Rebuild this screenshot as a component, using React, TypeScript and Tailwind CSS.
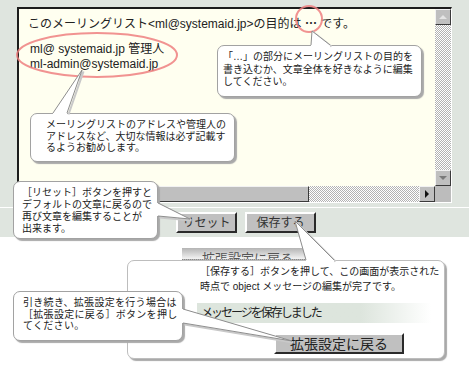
import React from "react";

type Pt = [number, number];

const pts = (list: Pt[]) => list.map((p) => p.join(",")).join(" ");

// callout tail: white wedge that hides the bubble border at its base, plus outline
const Tail = ({ fill, line }: { fill: Pt[]; line: Pt[] }) => (
  <svg
    className="pointer-events-none absolute left-0 top-0"
    width={469}
    height={369}
  >
    <polyline
      points={pts(line.map(([x, y]) => [x + 1.5, y + 1.5] as Pt))}
      fill="none"
      stroke="#c9c9c9"
      strokeWidth={2}
    />
    <polygon points={pts(fill)} fill="#fff" />
    <polyline points={pts(line)} fill="none" stroke="#8e8e8e" strokeWidth={1} />
  </svg>
);

const Bubble = ({
  className,
  children,
}: {
  className: string;
  children?: React.ReactNode;
}) => (
  <div
    className={`absolute rounded-[7px] border border-[#a2a2a2] bg-white shadow-[2px_2px_1px_#a9a9a9] ${className}`}
  >
    {children}
  </div>
);

const Arrow = ({ dir, tone }: { dir: "up" | "down" | "right"; tone: string }) => {
  const shape =
    dir === "up" ? "4,10 12,10 8,6" : dir === "down" ? "4,6 12,6 8,10" : "6,4 6,12 10,8";
  return (
    <div className="flex h-[16px] w-[16px] items-center justify-center border border-t-[#f2f2f2] border-l-[#f2f2f2] border-r-[#3a3a3a] border-b-[#3a3a3a] bg-[#bfbfbf]">
      <svg width={16} height={16} className="-m-px">
        <polygon points={shape} fill={tone} />
      </svg>
    </div>
  );
};

const checker =
  "bg-[image:repeating-conic-gradient(#b2b2b2_0%_25%,#ffffff_0%_50%)] bg-[length:2px_2px]";

const App = () => {
  return (
    <div className="relative h-[369px] w-[469px] overflow-hidden bg-white font-['Liberation_Sans','Noto_Sans_CJK_JP',sans-serif] text-[#222]">
      {/* editor panel */}
      <div className="h-[237px] bg-[#dfe5df] pt-[7px]">
        <div className="ml-[17px] flex h-[196px] w-[435px] flex-col border-t-2 border-l-2 border-r border-b border-t-[#1c1c1c] border-l-[#1c1c1c] border-r-white border-b-white">
          <div className="flex flex-1">
            <div className="flex-1 bg-[#fffff0] pl-[9px] pt-[6px] text-[12px] leading-[15px]">
              <div className="whitespace-nowrap">
                このメーリングリスト&lt;ml@systemaid.jp&gt;の目的は{" "}
                <span className="font-['Noto_Sans_CJK_JP',sans-serif] font-bold">…</span>{" "}
                です。
              </div>
              <div className="mt-[10px] pl-[2px]">ml@ systemaid.jp 管理人</div>
              <div className="pl-[2px]">ml-admin@systemaid.jp</div>
            </div>
            <div className="flex w-[16px] flex-col">
              <Arrow dir="up" tone="#e4e4e4" />
              <div className={`flex-1 ${checker}`} />
              <Arrow dir="down" tone="#7a7a7a" />
            </div>
          </div>
          <div className="flex h-[16px]">
            <div className="w-[16px] bg-[#bfbfbf]" />
            <div className="w-[274px] border border-t-[#f2f2f2] border-l-[#f2f2f2] border-r-[#3a3a3a] border-b-[#3a3a3a] bg-[#bfbfbf]" />
            <div className={`w-[110px] ${checker}`} />
            <Arrow dir="right" tone="#111" />
            <div className="w-[16px] bg-[#bcbcbc]" />
          </div>
        </div>
        <div className="mt-[4px] h-px bg-white" />
        <div className="mt-[4px] flex gap-[8px] pl-[176px]">
          <button className="h-[21px] w-[61px] border-2 border-t-white border-l-white border-r-[#2a2a2a] border-b-[#2a2a2a] bg-[#c0c0c0] text-[12px] text-[#333]">
            リセット
          </button>
          <button className="h-[21px] w-[71px] border-2 border-t-white border-l-white border-r-[#2a2a2a] border-b-[#2a2a2a] bg-[#c0c0c0] text-[12px] text-[#333]">
            保存する
          </button>
        </div>
      </div>

      {/* red marks on the editor text */}
      <svg className="pointer-events-none absolute left-0 top-0" width={469} height={369}>
        <ellipse cx={97} cy={55} rx={80} ry={22} fill="none" stroke="#ee8080" strokeWidth={2} opacity={0.85} />
        <circle cx={309} cy={19} r={13} fill="none" stroke="#ee8080" strokeWidth={2} opacity={0.85} />
      </svg>

      {/* callout: purpose */}
      <Bubble className="left-[217px] top-[45px] h-[52px] w-[205px] pl-[5px] pt-[5px] text-[10px] leading-[12.5px] whitespace-nowrap">
        「…」の部分にメーリングリストの目的を
        <br />
        書き込むか、文章全体を好きなように編集
        <br />
        してください。
      </Bubble>
      <Tail
        fill={[[311, 48], [311, 45], [312, 31], [330, 45], [330, 48]]}
        line={[[311, 45], [312, 31], [330, 45]]}
      />

      {/* callout: addresses */}
      <Bubble className="left-[30px] top-[113px] h-[49px] w-[205px] pl-[15px] pt-[5px] text-[10px] leading-[11.5px] whitespace-nowrap">
        メーリングリストのアドレスや管理人の
        <br />
        アドレスなど、大切な情報は必ず記載す
        <br />
        るようお勧めします。
      </Bubble>
      <Tail
        fill={[[53, 116], [53, 113], [82, 70], [67, 113], [67, 116]]}
        line={[[53, 113], [82, 70], [67, 113]]}
      />

      {/* callout: reset */}
      <Bubble className="left-[13px] top-[181px] h-[58px] w-[145px] pl-[8px] pt-[5px] text-[10px] leading-[12px] whitespace-nowrap">
        ［リセット］ボタンを押すと
        <br />
        デフォルトの文章に戻るので
        <br />
        再び文章を編集することが
        <br />
        出来ます。
      </Bubble>
      <Tail
        fill={[[155, 203], [158, 203], [190, 219], [158, 216], [155, 216]]}
        line={[[158, 203], [190, 219], [158, 216]]}
      />

      {/* faded edge of the next screen */}
      <div className="absolute left-[182px] top-[248px] h-[12px] w-[131px] overflow-hidden border-b border-dotted border-[#8a8a8a] bg-gradient-to-b from-[#b4b4b4] to-[#f4f4f4] text-center">
        <div className="pt-[3px] text-[13px] leading-[16px] text-[#555]">拡張設定に戻る</div>
      </div>
      <div className="absolute left-[312px] top-[248px] h-[18px] w-px bg-[#666]" />

      {/* callout: save, with zoomed result */}
      <Bubble className="left-[127px] top-[260px] h-[99px] w-[318px] border-[#bdbdbd] pl-[72px] pt-[4px]">
        <div className="text-[10px] leading-[14.5px] whitespace-nowrap">
          ［保存する］ボタンを押して、この画面が表示された
          <br />
          時点で object メッセージの編集が完了です。
        </div>
        <div className="mt-[9px] -ml-[3px] flex h-[20px] w-[234px] items-center bg-gradient-to-r from-[#dde5dd] from-70% to-white pl-[4px] text-[12px] tracking-[-2px] whitespace-nowrap">
          メッセージを保存しました
        </div>
        <button className="mt-[10px] ml-[74px] h-[21px] w-[130px] border-2 border-t-white border-l-white border-r-[#2a2a2a] border-b-[#2a2a2a] bg-[#c0c0c0] text-[14px] leading-none text-[#222]">
          拡張設定に戻る
        </button>
      </Bubble>
      <Tail
        fill={[[306, 263], [306, 260], [295, 221], [334, 260], [334, 263]]}
        line={[[306, 260], [295, 221], [334, 260]]}
      />

      {/* callout: back to settings */}
      <Bubble className="left-[13px] top-[291px] h-[50px] w-[170px] pl-[9px] pt-[5px] text-[10px] leading-[11.5px] tracking-[0.3px] whitespace-nowrap">
        引き続き、拡張設定を行う場合は
        <br />
        ［拡張設定に戻る］ボタンを押し
        <br />
        てください。
      </Bubble>
      <Tail
        fill={[[180, 309], [183, 309], [292, 341], [183, 323], [180, 323]]}
        line={[[183, 309], [292, 341], [183, 323]]}
      />
    </div>
  );
};

export default App;
